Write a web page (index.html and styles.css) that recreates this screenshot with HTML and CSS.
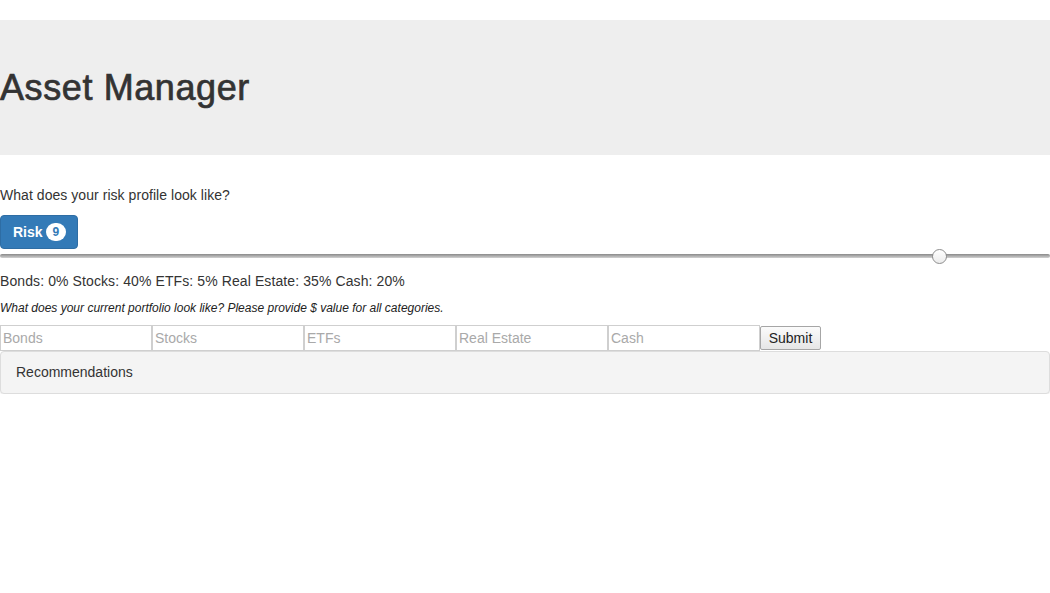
FILE: index.html
```html
<!DOCTYPE html>
<html lang="en">
<head>
<meta charset="utf-8">
<title>Asset Manager</title>
<link rel="stylesheet" href="styles.css">
</head>
<body>
  <header class="jumbotron">
    <h1 class="title">Asset Manager</h1>
  </header>
  <main class="content">
    <p class="question">What does your risk profile look like?</p>
    <button class="btn-risk" type="button">Risk <span class="badge">9</span></button>
    <input class="slider" type="range" min="0" max="10" value="9">
    <p class="allocation">Bonds: 0% Stocks: 40% ETFs: 5% Real Estate: 35% Cash: 20%</p>
    <p class="hint">What does your current portfolio look like? Please provide $ value for all categories.</p>
    <form class="portfolio">
      <input class="field" type="text" placeholder="Bonds">
      <input class="field" type="text" placeholder="Stocks">
      <input class="field" type="text" placeholder="ETFs">
      <input class="field" type="text" placeholder="Real Estate">
      <input class="field" type="text" placeholder="Cash">
      <button class="submit" type="button">Submit</button>
    </form>
    <section class="panel">
      <div class="panel-heading">Recommendations</div>
    </section>
  </main>
</body>
</html>
```
FILE: styles.css
```css
html, body {
  margin: 0;
  padding: 0;
  background: #fff;
}
body {
  font-family: "Liberation Sans", Arial, sans-serif;
  font-size: 14px;
  line-height: 20px;
  color: #333;
}
.jumbotron {
  margin-top: 20px;
  background: #eeeeee;
  height: 135px;
  padding-top: 48px;
  box-sizing: border-box;
}
.title {
  margin: 0;
  font-size: 36px;
  font-weight: normal;
  line-height: 39.6px;
  color: #333;
  letter-spacing: 0.6px;
  -webkit-text-stroke: 0.7px #333;
}
.content {
  display: flex;
  flex-direction: column;
  align-items: flex-start;
}
.question {
  margin: 30px 0 10px;
  letter-spacing: 0.05px;
}
.btn-risk {
  font-family: inherit;
  font-size: 14px;
  font-weight: bold;
  line-height: 20px;
  color: #fff;
  background: #337ab7;
  border: 1px solid #2e6da4;
  border-radius: 4px;
  padding: 6px 12px;
  height: 34px;
  width: 78px;
  box-sizing: border-box;
  display: flex;
  align-items: center;
  gap: 3px;
}
.badge {
  display: inline-block;
  background: #fff;
  color: #337ab7;
  font-size: 12px;
  font-weight: bold;
  line-height: 12px;
  padding: 3px 7px;
  border-radius: 10px;
}
.slider {
  -webkit-appearance: none;
  appearance: none;
  width: 1050px;
  height: 16px;
  margin: 0;
  padding: 0;
  margin-top: -1px;
  background: transparent;
}
.slider::-webkit-slider-runnable-track {
  height: 4px;
  background: linear-gradient(#8a8a8a, #b4b4b4 60%, #d2d2d2);
  border-radius: 2px;
  border: 0;
}
.slider::-webkit-slider-thumb {
  -webkit-appearance: none;
  appearance: none;
  width: 15px;
  height: 15px;
  margin-top: -5.5px;
  border-radius: 50%;
  background: linear-gradient(#ffffff, #ececec);
  border: 1px solid #8e8e8e;
  box-sizing: border-box;
}
.allocation {
  margin: 7px 0 0;
  letter-spacing: 0.1px;
}
.hint {
  margin: 9px 0 0;
  font-size: 12px;
  font-style: italic;
  line-height: 16px;
  color: #222;
}
.portfolio {
  margin-top: 9px;
  display: flex;
  align-items: center;
}
.field {
  width: 152px;
  height: 26px;
  box-sizing: border-box;
  margin: 0;
  border: 1px solid #cfcfcf;
  padding: 2px 2px;
  font-family: inherit;
  font-size: 14px;
  color: #333;
  background: #fff;
}
.field::placeholder {
  color: #a9a9a9;
}
.submit {
  width: 61px;
  height: 24px;
  margin: 0;
  box-sizing: border-box;
  font-family: inherit;
  font-size: 14px;
  color: #222;
  border: 1px solid #a6a6a6;
  border-radius: 2px;
  background: linear-gradient(#fbfbfb, #e6e6e6);
  padding: 0 4px;
}
.panel {
  width: 1050px;
  box-sizing: border-box;
  border: 1px solid #dddddd;
  border-radius: 4px;
  box-shadow: 0 1px 1px rgba(0, 0, 0, 0.06);
  background: #f4f4f4;
}
.panel-heading {
  padding: 10px 15px 11px;
  font-size: 14px;
  line-height: 20px;
  color: #333;
}
```
